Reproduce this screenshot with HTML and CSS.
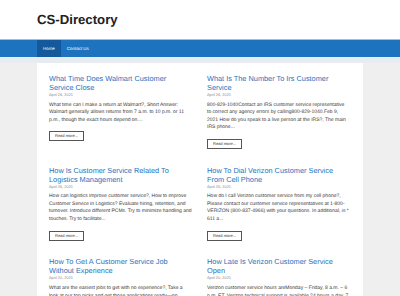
FILE: index.html
```html
<!DOCTYPE html>
<html lang="en">
<head>
<meta charset="utf-8">
<title>CS-Directory</title>
<link rel="stylesheet" href="styles.css">
</head>
<body>
<header class="site-header">
  <div class="site-title">CS-Directory</div>
</header>
<nav class="main-nav">
  <ul class="menu">
    <li class="menu-item current"><a href="#">Home</a></li>
    <li class="menu-item"><a href="#">Contact Us</a></li>
  </ul>
</nav>
<main class="content">
  <article class="post">
    <h2 class="post-title">What Time Does Walmart Customer Service Close</h2>
    <div class="post-date">April 26, 2021</div>
    <p class="post-excerpt">What time can I make a return at Walmart?, Short Answer: Walmart generally allows returns from 7 a.m. to 10 p.m. or 11 p.m., though the exact hours depend on…</p>
    <a class="read-more" href="#">Read more...</a>
  </article>
  <article class="post">
    <h2 class="post-title">What Is The Number To Irs Customer Service</h2>
    <div class="post-date">April 26, 2021</div>
    <p class="post-excerpt">800-829-1040Contact an IRS customer service representative to correct any agency errors by calling800-829-1040.Feb 9, 2021 How do you speak to a live person at the IRS?, The main IRS phone...</p>
    <a class="read-more" href="#">Read more...</a>
  </article>
  <article class="post">
    <h2 class="post-title">How Is Customer Service Related To Logistics Management</h2>
    <div class="post-date">April 25, 2021</div>
    <p class="post-excerpt">How can logistics improve customer service?, How to improve Customer Service in Logistics? Evaluate hiring, retention, and turnover. Introduce different PCMs. Try to minimize handling and touches. Try to facilitate...</p>
    <a class="read-more" href="#">Read more...</a>
  </article>
  <article class="post">
    <h2 class="post-title">How To Dial Verizon Customer Service From Cell Phone</h2>
    <div class="post-date">April 25, 2021</div>
    <p class="post-excerpt">How do I call Verizon customer service from my cell phone?, Please contact our customer service representatives at 1-800-VERIZON (800-837-4966) with your questions. In additional, is * 611 a...</p>
    <a class="read-more" href="#">Read more...</a>
  </article>
  <article class="post">
    <h2 class="post-title">How To Get A Customer Service Job Without Experience</h2>
    <div class="post-date">April 20, 2021</div>
    <p class="post-excerpt">What are the easiest jobs to get with no experience?, Take a look at our top picks and get those applications ready—no experience required...</p>
    <a class="read-more" href="#">Read more...</a>
  </article>
  <article class="post">
    <h2 class="post-title">How Late Is Verizon Customer Service Open</h2>
    <div class="post-date">April 20, 2021</div>
    <p class="post-excerpt">Verizon customer service hours areMonday – Friday, 8 a.m. – 6 p.m. ET. Verizon technical support is available 24 hours a day, 7 days a week...</p>
    <a class="read-more" href="#">Read more...</a>
  </article>
</main>
</body>
</html>
```

FILE: styles.css
```css
html, body {
  margin: 0;
  padding: 0;
}

body {
  background: #efefef;
  font-family: "Liberation Sans", Arial, sans-serif;
  color: #3a3a3a;
  text-rendering: geometricPrecision;
}

.site-header {
  background: #ffffff;
  height: 39px;
  box-sizing: border-box;
  padding: 12px 0 0 37px;
}

.site-title {
  font-size: 13.2px;
  line-height: 16px;
  font-weight: bold;
  color: #222222;
}

.main-nav {
  background: #1e73be;
  border-top: 1px solid #9fc0dd;
  border-bottom: 6px solid #e7ecf0;
  height: 17px;
  padding-left: 37px;
}

.menu {
  list-style: none;
  margin: 0;
  padding: 0;
  display: flex;
  height: 17px;
}

.menu-item a {
  display: block;
  padding: 0 6px;
  font-size: 4.45px;
  line-height: 17px;
  color: #ffffff;
  text-decoration: none;
}

.menu-item.current a {
  background: #13599b;
}

.content {
  margin-left: 37px;
  width: 326px;
  box-sizing: border-box;
  background: #ffffff;
  padding: 11px 13px 0 12px;
  display: grid;
  grid-template-columns: 143px 142.4px;
  column-gap: 15px;
  row-gap: 15.7px;
  align-items: start;
}

.post-title {
  margin: 0;
  font-size: 7.35px;
  line-height: 9px;
  font-weight: normal;
  color: #1e73be;
}

.post-date {
  font-size: 3.9px;
  line-height: 5px;
  color: #8a8a8a;
}

.post-excerpt {
  margin: 4.7px 0 0;
  font-size: 5px;
  line-height: 7.5px;
  color: #3a3a3a;
}

.read-more {
  display: inline-block;
  margin-top: 7.3px;
  height: 10px;
  box-sizing: border-box;
  border: 1px solid #555555;
  padding: 0 5px;
  font-size: 4px;
  line-height: 8px;
  color: #333333;
  text-decoration: none;
}
```
